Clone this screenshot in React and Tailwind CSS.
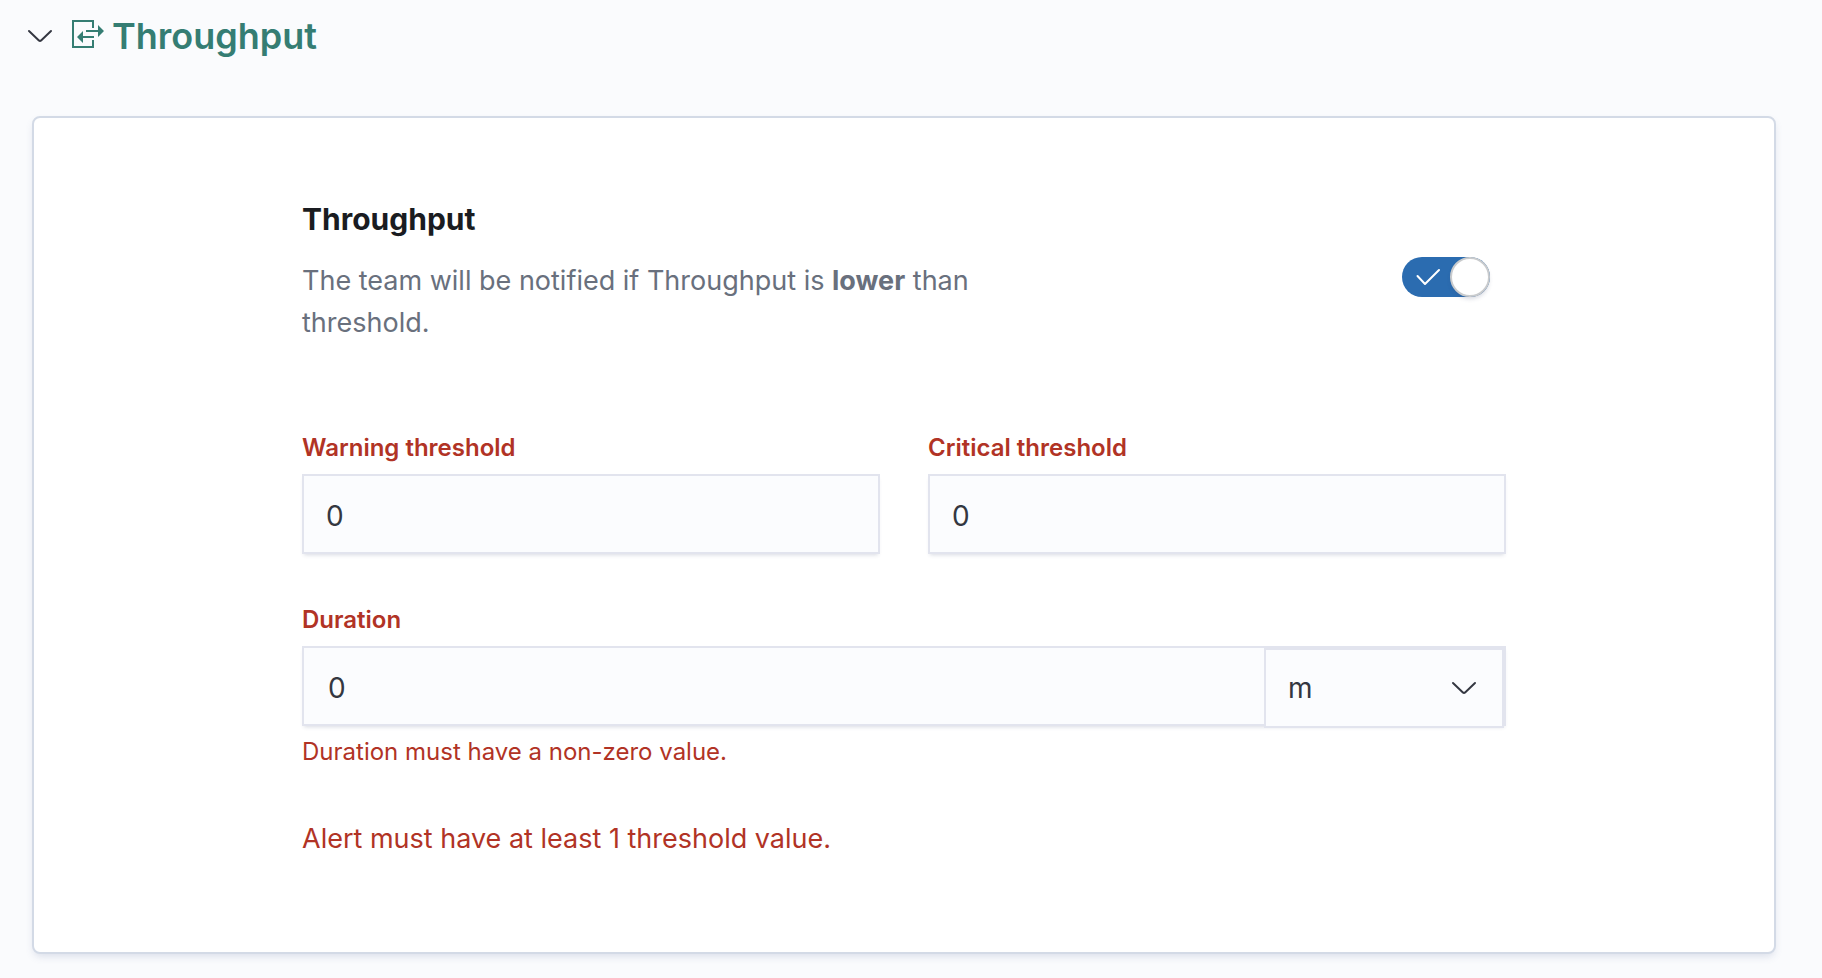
import { useState } from "react";

function Chevron() {
  return (
    <svg
      viewBox="0 0 32 32"
      className="h-8 w-8"
      fill="none"
      stroke="currentColor"
      strokeWidth="2"
      strokeLinecap="round"
      aria-hidden="true"
    >
      <path d="M5 11 L14.9 20.4 Q16 21.4 17.1 20.4 L27 11" />
    </svg>
  );
}

function ThroughputIcon() {
  return (
    <svg viewBox="0 0 32 32" className="h-8 w-8" fill="currentColor" aria-hidden="true">
      <path d="M0 0H22V8H20V2H0Z M0 0H2V28H0Z M0 26H20V20H22V28H0Z" />
      <path d="M14 10H26V5L32 11L26 17V12H14Z" />
      <path d="M22 16H11V11L5 17L11 23V18H22Z" />
    </svg>
  );
}

function ThresholdField({ id, label }) {
  return (
    <div className="flex min-w-0 flex-1 flex-col gap-2">
      <label htmlFor={id} className="text-2xl leading-9 font-semibold text-[#b13325]">
        {label}
      </label>
      <input
        id={id}
        type="text"
        inputMode="numeric"
        defaultValue="0"
        className="h-20 w-full border-2 border-[#e2e4ee] bg-[#fbfcfe] px-[22px] pt-1 text-[28px] text-[#343741] shadow-[0_3px_4px_-2px_rgba(60,70,110,0.2)] outline-none"
      />
    </div>
  );
}

export default function App() {
  const [open, setOpen] = useState(true);
  const [enabled, setEnabled] = useState(true);

  return (
    <main className="min-h-screen bg-[#fafbfd] px-8 pt-3 pb-6 pr-[46px] font-['Inter',sans-serif] text-[#343741]">
      <div className="-ml-2 flex h-12 items-center">
        <button
          type="button"
          aria-label="Toggle Throughput section"
          aria-expanded={open}
          onClick={() => setOpen(!open)}
          className="h-8 w-8"
        >
          <Chevron />
        </button>
        <div className="ml-4 flex items-center gap-2 text-[#357d73]">
          <ThroughputIcon />
          <h2 className="text-4xl leading-[48px] font-semibold">Throughput</h2>
        </div>
      </div>

      {open && (
        <section className="mt-14 rounded-lg border-2 border-[#d3dae6] bg-white px-8 pt-20 pb-[92px] shadow-[0_4px_8px_-2px_rgba(80,100,150,0.2)]">
          <div className="mx-auto max-w-[1204px]">
            <div className="flex items-center justify-between pr-4">
              <div className="max-w-[700px] pb-3">
                <h3 className="text-[30px] leading-[42px] font-bold text-[#1a1c21]">Throughput</h3>
                <p className="mt-5 text-[27px] leading-[42px] text-[#69707d]">
                  The team will be notified if Throughput is <strong className="font-bold">lower</strong> than threshold.
                </p>
              </div>
              <button
                type="button"
                role="switch"
                aria-checked={enabled}
                aria-label="Throughput alert"
                onClick={() => setEnabled(!enabled)}
                className="flex h-10 w-[88px] items-center justify-between rounded-full bg-[#2b6cb0] pl-[14px]"
              >
                <svg
                  viewBox="0 0 26 20"
                  className="h-5 w-[26px]"
                  fill="none"
                  stroke="#fff"
                  strokeWidth="2"
                  strokeLinecap="round"
                  strokeLinejoin="round"
                  aria-hidden="true"
                >
                  <path d="M1.5 9 L9 17 L23 3" />
                </svg>
                <span className="h-10 w-10 rounded-full border-2 border-[#c9cbcd] bg-white shadow-[0_3px_4px_-1px_rgba(60,70,110,0.2)]" />
              </button>
            </div>

            <div className="mt-[74px] flex gap-12">
              <ThresholdField id="warning" label="Warning threshold" />
              <ThresholdField id="critical" label="Critical threshold" />
            </div>

            <div className="mt-12 flex flex-col gap-2">
              <label htmlFor="duration" className="text-2xl leading-9 font-semibold text-[#b13325]">
                Duration
              </label>
              <div className="flex h-20 border-2 border-[#e2e4ee] bg-[#fbfcfe] shadow-[0_3px_4px_-2px_rgba(60,70,110,0.2)]">
                <input
                  id="duration"
                  type="text"
                  inputMode="numeric"
                  defaultValue="0"
                  aria-describedby="duration-error"
                  className="min-w-0 flex-1 bg-transparent px-6 pt-1 text-[28px] outline-none"
                />
                <div className="grid h-20 w-60 items-center">
                  <select
                    aria-label="Duration unit"
                    defaultValue="m"
                    className="col-start-1 row-start-1 h-20 w-full appearance-none border-2 border-[#e2e4ee] bg-[#fbfcfe] px-[22px] text-[28px] outline-none"
                  >
                    <option value="s">s</option>
                    <option value="m">m</option>
                    <option value="h">h</option>
                  </select>
                  <span className="pointer-events-none col-start-1 row-start-1 mr-6 justify-self-end">
                    <Chevron />
                  </span>
                </div>
              </div>
              <p id="duration-error" className="text-2xl leading-9 text-[#b13325]">
                Duration must have a non-zero value.
              </p>
            </div>

            <p role="alert" className="mt-12 text-[27px] leading-[42px] text-[#b13325]">
              Alert must have at least 1 threshold value.
            </p>
          </div>
        </section>
      )}
    </main>
  );
}
